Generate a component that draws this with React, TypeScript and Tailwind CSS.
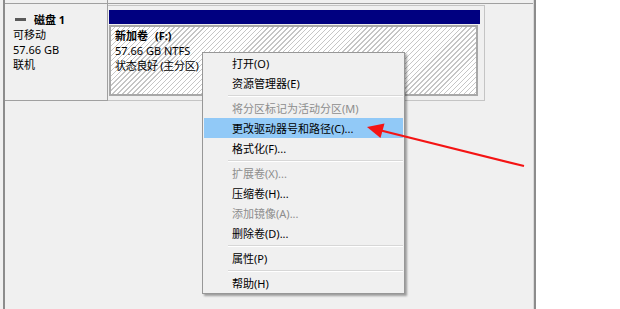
const font = { fontFamily: '"Noto Sans", "Noto Sans CJK SC", sans-serif' }

type MenuEntry =
  | { kind: 'sep' }
  | { kind: 'item'; label: string; disabled?: boolean; active?: boolean }

const menu: MenuEntry[] = [
  { kind: 'item', label: '打开(O)' },
  { kind: 'item', label: '资源管理器(E)' },
  { kind: 'sep' },
  { kind: 'item', label: '将分区标记为活动分区(M)', disabled: true },
  { kind: 'item', label: '更改驱动器号和路径(C)...', active: true },
  { kind: 'item', label: '格式化(F)...' },
  { kind: 'sep' },
  { kind: 'item', label: '扩展卷(X)...', disabled: true },
  { kind: 'item', label: '压缩卷(H)...' },
  { kind: 'item', label: '添加镜像(A)...', disabled: true },
  { kind: 'item', label: '删除卷(D)...' },
  { kind: 'sep' },
  { kind: 'item', label: '属性(P)' },
  { kind: 'sep' },
  { kind: 'item', label: '帮助(H)' },
]

function ContextMenu() {
  return (
    <div className="absolute left-[202px] top-[52px] w-[203px] border border-[#979797] bg-[#f0f0f0] px-px shadow-[2px_2px_2px_rgba(0,0,0,0.35)]">
      {menu.map((entry, i) =>
        entry.kind === 'sep' ? (
          <div key={i} className="h-[5px] pt-[2px] ml-[24px]">
            <div className="h-px bg-[#d7d7d7]"></div>
            <div className="h-px bg-white"></div>
          </div>
        ) : (
          <div
            key={i}
            className={`h-[20px] flex items-center pl-[28px] text-[11px] leading-none ${
              entry.active ? 'bg-[#91c9f7]' : ''
            } ${entry.disabled ? 'text-[#8d8d8d]' : 'text-black'}`}
          >
            {entry.label}
          </div>
        )
      )}
    </div>
  )
}

export default function App() {
  return (
    <div className="relative w-[620px] h-[309px] bg-white flex overflow-hidden" style={font}>
      {/* disk management panel */}
      <div className="w-[3px] bg-[#f0f0f0]"></div>
      <div className="w-[2px] bg-[#8c8c8c]"></div>
      <div className="w-[529px] bg-[#f0f0f0] flex flex-col border-r border-[#dadada]">
        {/* tail of previous row */}
        <div className="h-[3px] flex">
          <div className="w-[103px] border-r border-[#a0a0a0]"></div>
        </div>
        <div className="h-px bg-[#a0a0a0]"></div>

        {/* disk row */}
        <div className="flex h-[97px]">
          <div className="w-[103px] border-r border-b border-[#a0a0a0] pt-[8px] pl-[8px] text-[11px] leading-[15px] text-black">
            <div className="flex items-center font-bold">
              <span className="w-[11px] h-[3px] ml-[2px] mr-[8px] bg-[#5a5a5a]"></span>
              磁盘 1
            </div>
            <div>可移动</div>
            <div>57.66 GB</div>
            <div>联机</div>
          </div>

          <div className="mt-px w-[377px] h-[96px] border-t border-r border-b border-[#c4c4c4] pt-[4px]">
            <div className="ml-px w-[371px] h-[14px] bg-[#000080]"></div>
            <div className="mt-px ml-px w-[369px] h-[71px] border-2 border-[#a8a8a8] pt-px pl-[4px] text-[11px] leading-[15px] text-black bg-[repeating-linear-gradient(135deg,#ffffff_0px,#ffffff_2.5px,#c6c6c6_2.5px,#c6c6c6_3.5px)]">
              <div className="font-bold">
                新加卷<span className="ml-[7px]">(F:)</span>
              </div>
              <div>57.66 GB NTFS</div>
              <div className="tracking-[-0.3px]">状态良好 (主分区)</div>
            </div>
          </div>
        </div>
      </div>
      <div className="w-[2px] bg-[#8c8c8c]"></div>
      <div className="flex-1 bg-white"></div>

      <ContextMenu />

      {/* red annotation arrow */}
      <svg className="absolute left-0 top-0" width="620" height="309" viewBox="0 0 620 309">
        <line x1="379" y1="130" x2="524" y2="166" stroke="#f41414" strokeWidth="2.2" />
        <polygon points="367,127 384.5,123.5 380.5,138" fill="#f41414" />
      </svg>
    </div>
  )
}
